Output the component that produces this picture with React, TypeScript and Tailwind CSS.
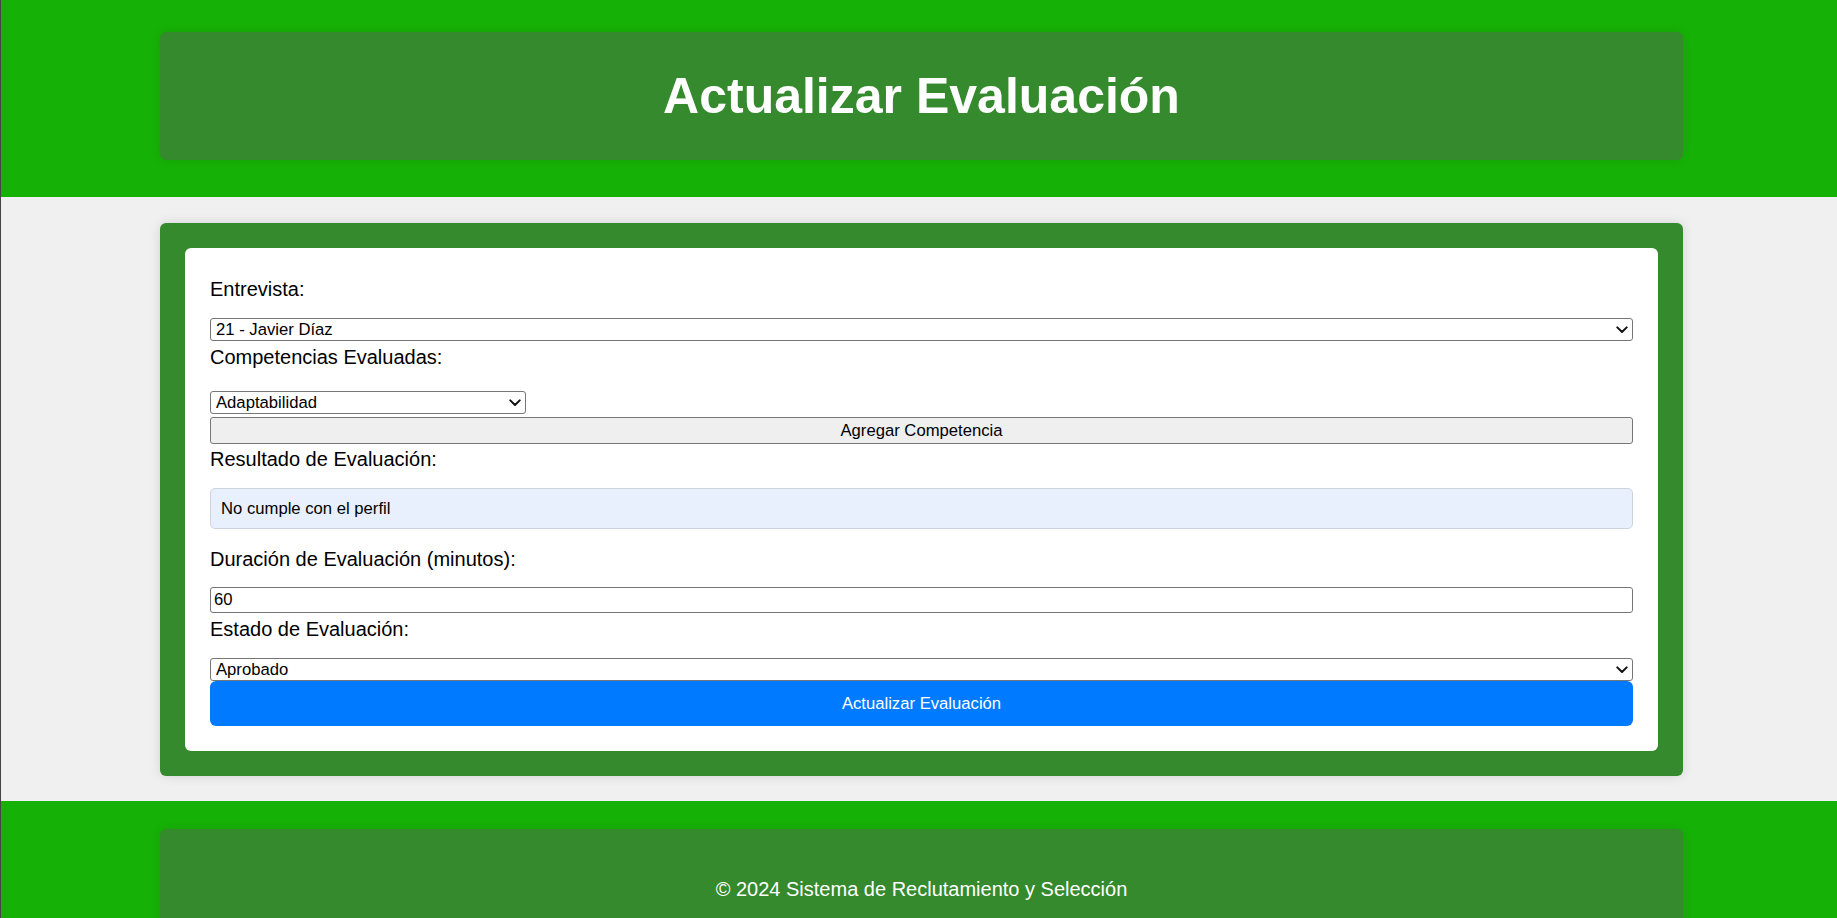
import React from "react";

function Chevron() {
  return (
    <svg
      className="pointer-events-none absolute right-[5px] top-1/2 -translate-y-1/2"
      width="12"
      height="8"
      viewBox="0 0 12 8"
      fill="none"
    >
      <path d="M1.3 1.4 L6 6 L10.7 1.4" stroke="#111" strokeWidth="2" strokeLinecap="round" strokeLinejoin="round" />
    </svg>
  );
}

function Select({
  value,
  options,
  className,
}: {
  value: string;
  options: string[];
  className: string;
}) {
  return (
    <div className={"relative " + className}>
      <select
        defaultValue={value}
        className="block h-[23px] w-full appearance-none rounded-[3px] border border-[#767676] bg-white pl-[5px] pr-[20px] text-[16.67px] leading-[19px] text-black outline-none"
      >
        {options.map((o) => (
          <option key={o} value={o}>
            {o}
          </option>
        ))}
      </select>
      <Chevron />
    </div>
  );
}

export default function App() {
  return (
    <div className="min-h-screen border-l border-[#454545] bg-[#f0f0f0] font-['Liberation_Sans',Arial,sans-serif] text-black">
      <header className="bg-[#16b106] pt-[32px] pb-[37px]">
        <div className="ml-[159px] flex h-[128px] w-[1523px] items-center justify-center rounded-[6px] bg-[#348a2c] shadow-[0_0_10px_rgba(0,0,0,0.1)]">
          <h1 className="text-[50px] font-bold leading-[57px] text-white">Actualizar Evaluación</h1>
        </div>
      </header>

      <main className="pt-[26px] pb-[25px]">
        <div className="ml-[159px] w-[1523px] rounded-[6px] bg-[#348a2c] p-[25px] shadow-[0_0_12px_rgba(0,0,0,0.12)]">
          <form
            className="rounded-[6px] bg-white px-[25px] pt-[30px] pb-[25px]"
            onSubmit={(e) => e.preventDefault()}
          >
            <label className="block text-[20px] leading-[23px]">Entrevista:</label>
            <Select
              className="mt-[17px] w-full"
              value="21 - Javier Díaz"
              options={["21 - Javier Díaz"]}
            />

            <label className="mt-[5px] block text-[20px] leading-[23px]">Competencias Evaluadas:</label>
            <Select
              className="mt-[22px] w-[316px]"
              value="Adaptabilidad"
              options={["Adaptabilidad"]}
            />
            <button
              type="button"
              className="mt-[3px] block h-[27px] w-full rounded-[3px] border border-[#767676] bg-[#efefef] text-center text-[16.67px] leading-[19px] text-black"
            >
              Agregar Competencia
            </button>

            <label className="mt-[4px] block text-[20px] leading-[23px]">Resultado de Evaluación:</label>
            <div className="mt-[17px] h-[41px] w-full rounded-[5px] border border-[#cdd3dc] bg-[#e8f0fe] px-[10px] py-[10px] text-[16.67px] leading-[19px]">
              No cumple con el perfil
            </div>

            <label className="mt-[19px] block text-[20px] leading-[23px]">Duración de Evaluación (minutos):</label>
            <input
              type="text"
              defaultValue="60"
              className="mt-[16px] block h-[26px] w-full rounded-[3px] border border-[#767676] bg-white pl-[3px] text-[16.67px] leading-[19px] text-black outline-none"
            />

            <label className="mt-[5px] block text-[20px] leading-[23px]">Estado de Evaluación:</label>
            <Select className="mt-[17px] w-full" value="Aprobado" options={["Aprobado"]} />

            <button
              type="submit"
              className="block h-[45px] w-full rounded-[6px] bg-[#007bff] text-center text-[16.67px] leading-[19px] text-white"
            >
              Actualizar Evaluación
            </button>
          </form>
        </div>
      </main>

      <footer className="bg-[#16b106] pt-[28px] pb-[32px]">
        <div className="ml-[159px] h-[128px] w-[1523px] rounded-[6px] bg-[#348a2c] pt-[49px] text-center shadow-[0_0_10px_rgba(0,0,0,0.1)]">
          <p className="text-[20px] leading-[23px] text-white">© 2024 Sistema de Reclutamiento y Selección</p>
        </div>
      </footer>
    </div>
  );
}
